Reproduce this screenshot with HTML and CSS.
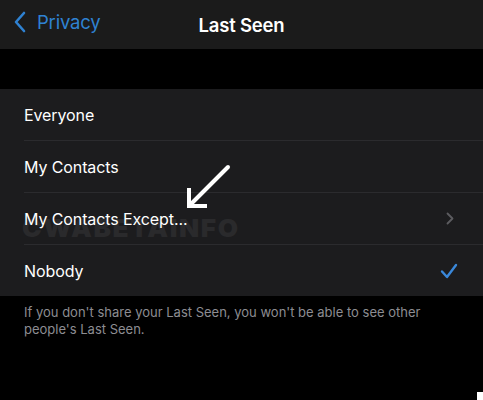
FILE: index.html
```html
<!DOCTYPE html>
<html lang="en">
<head>
  <meta charset="UTF-8">
  <title>Last Seen</title>
  <meta name="viewport" content="width=device-width, initial-scale=1.0">
  <link rel="stylesheet" href="styles.css">
</head>
<body>
  <header class="nav">
    <a class="back" href="#">
      <svg class="back-icon" width="14" height="22" viewBox="0 0 14 22">
        <path d="M11 2 L3 11 L11 20" fill="none" stroke="#2f82d2" stroke-width="2.6" stroke-linecap="round" stroke-linejoin="round"/>
      </svg>
      <span>Privacy</span>
    </a>
    <h1 class="title">Last Seen</h1>
  </header>

  <div class="spacer"></div>

  <ul class="list">
    <li class="row"><span>Everyone</span></li>
    <li class="row"><span>My Contacts</span></li>
    <li class="row except">
      <span class="watermark">CWABETAINFO</span>
      <span class="label">My Contacts Except...</span>
      <svg class="chevron" width="8" height="13" viewBox="0 0 8 13">
        <path d="M1.5 1.5 L6.5 6.5 L1.5 11.5" fill="none" stroke="#5c5c60" stroke-width="1.8" stroke-linecap="round" stroke-linejoin="round"/>
      </svg>
    </li>
    <li class="row">
      <span>Nobody</span>
      <svg class="check" width="18" height="16" viewBox="0 0 18 16">
        <path d="M2 8.5 L7 14 L16 2" fill="none" stroke="#3a88da" stroke-width="2.4" stroke-linecap="round" stroke-linejoin="round"/>
      </svg>
    </li>
  </ul>

  <p class="note">If you don't share your Last Seen, you won't be able to see other people's Last Seen.</p>

  <!-- flecha desenhada por cima da captura -->
  <svg class="arrow" width="50" height="50" viewBox="0 0 50 50">
    <path d="M44 3 L6 41" stroke="#fff" stroke-width="4" stroke-linecap="round"/>
    <path d="M5 26 L5 42 L21 42" fill="none" stroke="#fff" stroke-width="4" stroke-linecap="square"/>
  </svg>
  <span class="dot"></span>
</body>
</html>
```

FILE: styles.css
```css
body {
  margin: 0;
  width: 483px;
  height: 400px;
  background: #000;
  font-family: Inter, 'Noto Sans', Arial, sans-serif;
  color: #fff;
  overflow: hidden;
  position: relative;
}
.nav {
  height: 49px;
  background: #1b1b1b;
  display: flex;
  align-items: center;
  justify-content: center;
  position: relative;
}
.back {
  position: absolute;
  left: 13px;
  top: 11px;
  display: flex;
  align-items: center;
  gap: 10px;
  color: #2f82d2;
  text-decoration: none;
  font-size: 18.5px;
  letter-spacing: -0.2px;
}
.title {
  margin: 0;
  font-size: 18.5px;
  font-weight: 600;
  letter-spacing: -0.2px;
}
.spacer {
  height: 40px;
}
.list {
  list-style: none;
  margin: 0;
  padding: 0 0 0 24px;
  background: #1c1c1e;
}
.row {
  height: 51px;
  display: flex;
  align-items: center;
  justify-content: space-between;
  padding-right: 27px;
  border-bottom: 1px solid #2b2b2e;
  font-size: 16px;
  letter-spacing: -0.1px;
  position: relative;
}
.row:last-child {
  border-bottom: none;
}
.except .label {
  position: relative;
  z-index: 1;
}
.chevron {
  margin-right: 2px;
}
.check {
  margin-right: -2px;
}
.watermark {
  position: absolute;
  left: -2px;
  top: 20px;
  font-size: 25px;
  font-weight: 900;
  letter-spacing: 1.5px;
  color: #2a2a2c;
  transform: scaleX(1.05);
  transform-origin: left;
}
.note {
  margin: 8px 24px 0;
  font-size: 13px;
  line-height: 17px;
  color: #8d8d92;
}
.arrow {
  position: absolute;
  left: 184px;
  top: 164px;
}
.dot {
  position: absolute;
  left: 477px;
  top: 392px;
  width: 6px;
  height: 8px;
  background: #fff;
}
```
